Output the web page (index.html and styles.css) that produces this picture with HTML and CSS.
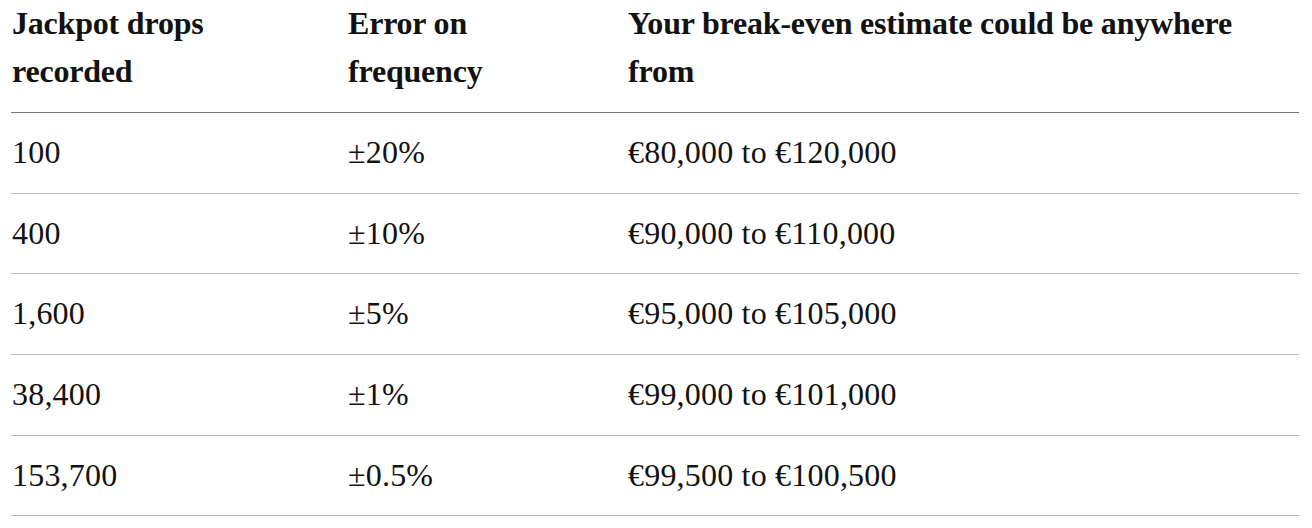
FILE: index.html
```html
<!DOCTYPE html>
<html lang="en">
<head>
<meta charset="utf-8">
<title>Jackpot drops</title>
<link rel="stylesheet" href="styles.css">
</head>
<body>
<table class="data-table">
  <colgroup>
    <col class="col-a">
    <col class="col-b">
    <col class="col-c">
  </colgroup>
  <thead>
    <tr>
      <th>Jackpot drops recorded</th>
      <th>Error on frequency</th>
      <th>Your break-even estimate could be anywhere from</th>
    </tr>
  </thead>
  <tbody>
    <tr><td>100</td><td>±20%</td><td>€80,000 to €120,000</td></tr>
    <tr><td>400</td><td>±10%</td><td>€90,000 to €110,000</td></tr>
    <tr><td>1,600</td><td>±5%</td><td>€95,000 to €105,000</td></tr>
    <tr><td>38,400</td><td>±1%</td><td>€99,000 to €101,000</td></tr>
    <tr><td>153,700</td><td>±0.5%</td><td>€99,500 to €100,500</td></tr>
  </tbody>
</table>
</body>
</html>
```
FILE: styles.css
```css
html, body {
  margin: 0;
  padding: 0;
  background: #ffffff;
}
body {
  padding: 0 13px 0 11px;
  font-family: "Liberation Serif", "DejaVu Serif", serif;
  color: #121212;
}
.data-table {
  width: 1288px;
  border-collapse: collapse;
  table-layout: fixed;
  font-size: 32px;
  line-height: 47.6px;
}
.col-a { width: 336px; }
.col-b { width: 280px; }
.col-c { width: 672px; }
.data-table th {
  text-align: left;
  vertical-align: top;
  font-weight: 700;
  padding: 0 40px 17px 1px;
  border-bottom: 1px solid #777777;
  letter-spacing: -0.2px;
}
.data-table td {
  padding: 16px 0 16px 1px;
  border-bottom: 1px solid #bbbbbb;
  font-weight: 400;
  letter-spacing: 0.2px;
}
```
